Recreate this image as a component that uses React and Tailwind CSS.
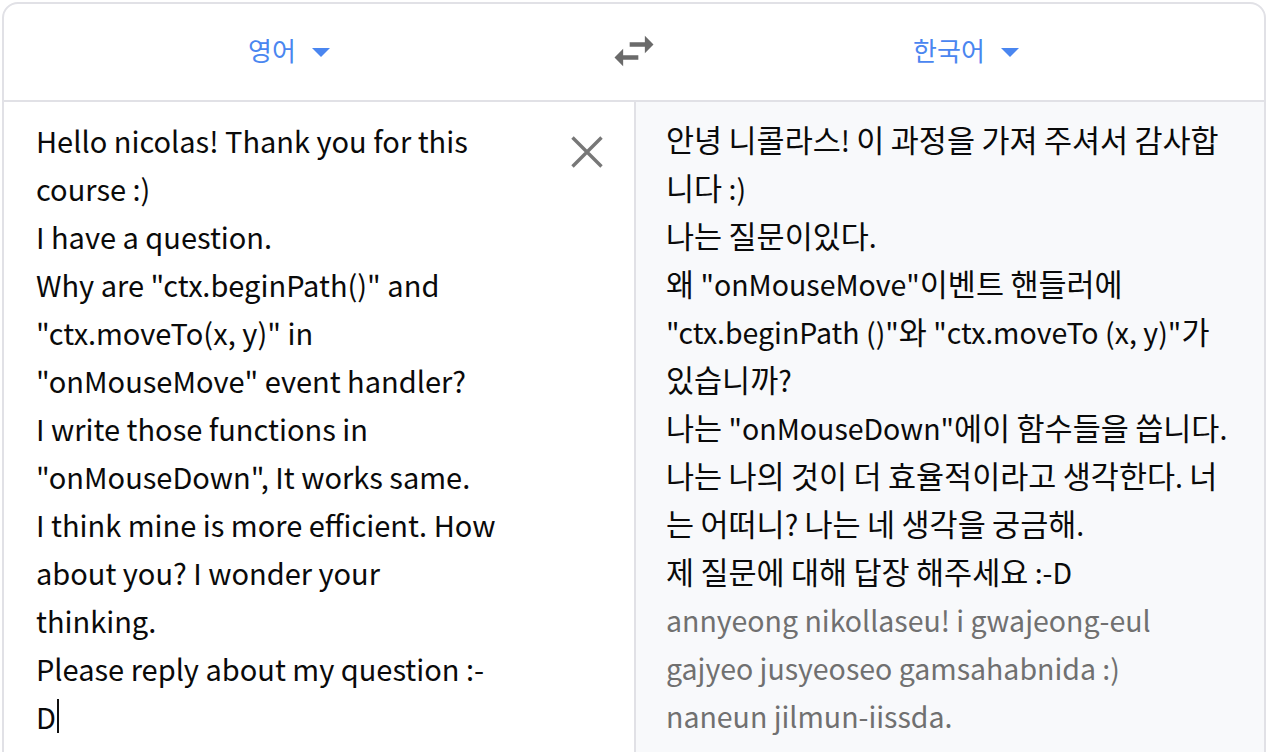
import React from "react";

const leftLines = [
  "Hello nicolas! Thank you for this",
  "course :)",
  "I have a question.",
  "Why are \"ctx.beginPath()\" and",
  "\"ctx.moveTo(x, y)\" in",
  "\"onMouseMove\" event handler?",
  "I write those functions in",
  "\"onMouseDown\", It works same.",
  "I think mine is more efficient. How",
  "about you? I wonder your",
  "thinking.",
  "Please reply about my question :-",
];

const rightLines = [
  "안녕 니콜라스! 이 과정을 가져 주셔서 감사합",
  "니다 :)",
  "나는 질문이있다.",
  "왜 \"onMouseMove\"이벤트 핸들러에",
  "\"ctx.beginPath ()\"와 \"ctx.moveTo (x, y)\"가",
  "있습니까?",
  "나는 \"onMouseDown\"에이 함수들을 씁니다.",
  "나는 나의 것이 더 효율적이라고 생각한다. 너",
  "는 어떠니? 나는 네 생각을 궁금해.",
  "제 질문에 대해 답장 해주세요 :-D",
];

const romanLines = [
  "annyeong nikollaseu! i gwajeong-eul",
  "gajyeo jusyeoseo gamsahabnida :)",
  "naneun jilmun-iissda.",
];

function Mixed({ text }) {
  const parts = text.split(/([\uAC00-\uD7A3]+)/);
  return (
    <>
      {parts.map((p, i) =>
        /[\uAC00-\uD7A3]/.test(p) ? (
          <span key={i} className="text-[30.5px] leading-[0]">{p}</span>
        ) : (
          <span key={i}>{p}</span>
        )
      )}
    </>
  );
}

function Caret() {
  return (
    <svg width="18" height="12" viewBox="0 0 18 12" className="ml-[16px] mt-[4px]">
      <path d="M0 2 L18 2 L9 11 Z" fill="#4a86f0" />
    </svg>
  );
}

export default function App() {
  const font = { fontFamily: '"Noto Sans CJK KR", "Noto Sans", sans-serif' };
  return (
    <div className="w-[1268px] h-[752px] overflow-hidden bg-white" style={font}>
      <div className="mx-[2px] mt-[2px] h-[800px] border-2 border-[#e1e1e6] rounded-t-[16px] flex flex-col">
        <div className="h-[98px] flex items-center border-b-2 border-[#e1e1e6] pb-[4px]">
          <div className="w-[572px] flex items-center justify-center pr-[2px]">
            <span className="text-[26px] text-[#4a86f0] leading-none">영어</span>
            <Caret />
          </div>
          <div className="w-[118px] flex items-center justify-center">
            <svg width="52" height="52" viewBox="0 0 24 24" className="-ml-[2px] mt-[2px]">
              <path
                d="M6.99 11L3 15l3.99 4v-3H14v-2H6.99v-3zM21 9l-3.99-4v3H10v2h7.01v3L21 9z"
                fill="#6a6a6a"
              />
            </svg>
          </div>
          <div className="flex-1 flex items-center justify-center pr-[26px]">
            <span className="text-[26px] text-[#4a86f0] leading-none">한국어</span>
            <Caret />
          </div>
        </div>
        <div className="flex flex-1">
          <div className="w-[632px] border-r-2 border-[#e1e1e6] flex pt-[14px] pl-[32px]">
            <div className="w-[521px] text-[29px] leading-[48px] text-[#0a0a0a]">
              {leftLines.map((l, i) => (
                <div key={i} className="whitespace-pre h-[48px]">{l}</div>
              ))}
              <div className="flex items-center h-[48px]">
                <span>D</span>
                <span className="inline-block w-[2px] h-[34px] bg-[#111] ml-[1px]" />
              </div>
            </div>
            <div className="pt-[20px] pl-[14px]">
              <svg width="32" height="32" viewBox="0 0 32 32">
                <path d="M1.5 1.5 L30.5 30.5 M30.5 1.5 L1.5 30.5" stroke="#777" strokeWidth="3.4" />
              </svg>
            </div>
          </div>
          <div className="flex-1 bg-[#f8f9fb] pt-[14px] pl-[30px] text-[28.5px] leading-[48px]">
            {rightLines.map((l, i) => (
              <div key={i} className="whitespace-pre text-[#0a0a0a] h-[48px]">
                <Mixed text={l} />
              </div>
            ))}
            {romanLines.map((l, i) => (
              <div key={i} className="whitespace-pre text-[#707070] h-[48px]">{l}</div>
            ))}
          </div>
        </div>
      </div>
    </div>
  );
}
